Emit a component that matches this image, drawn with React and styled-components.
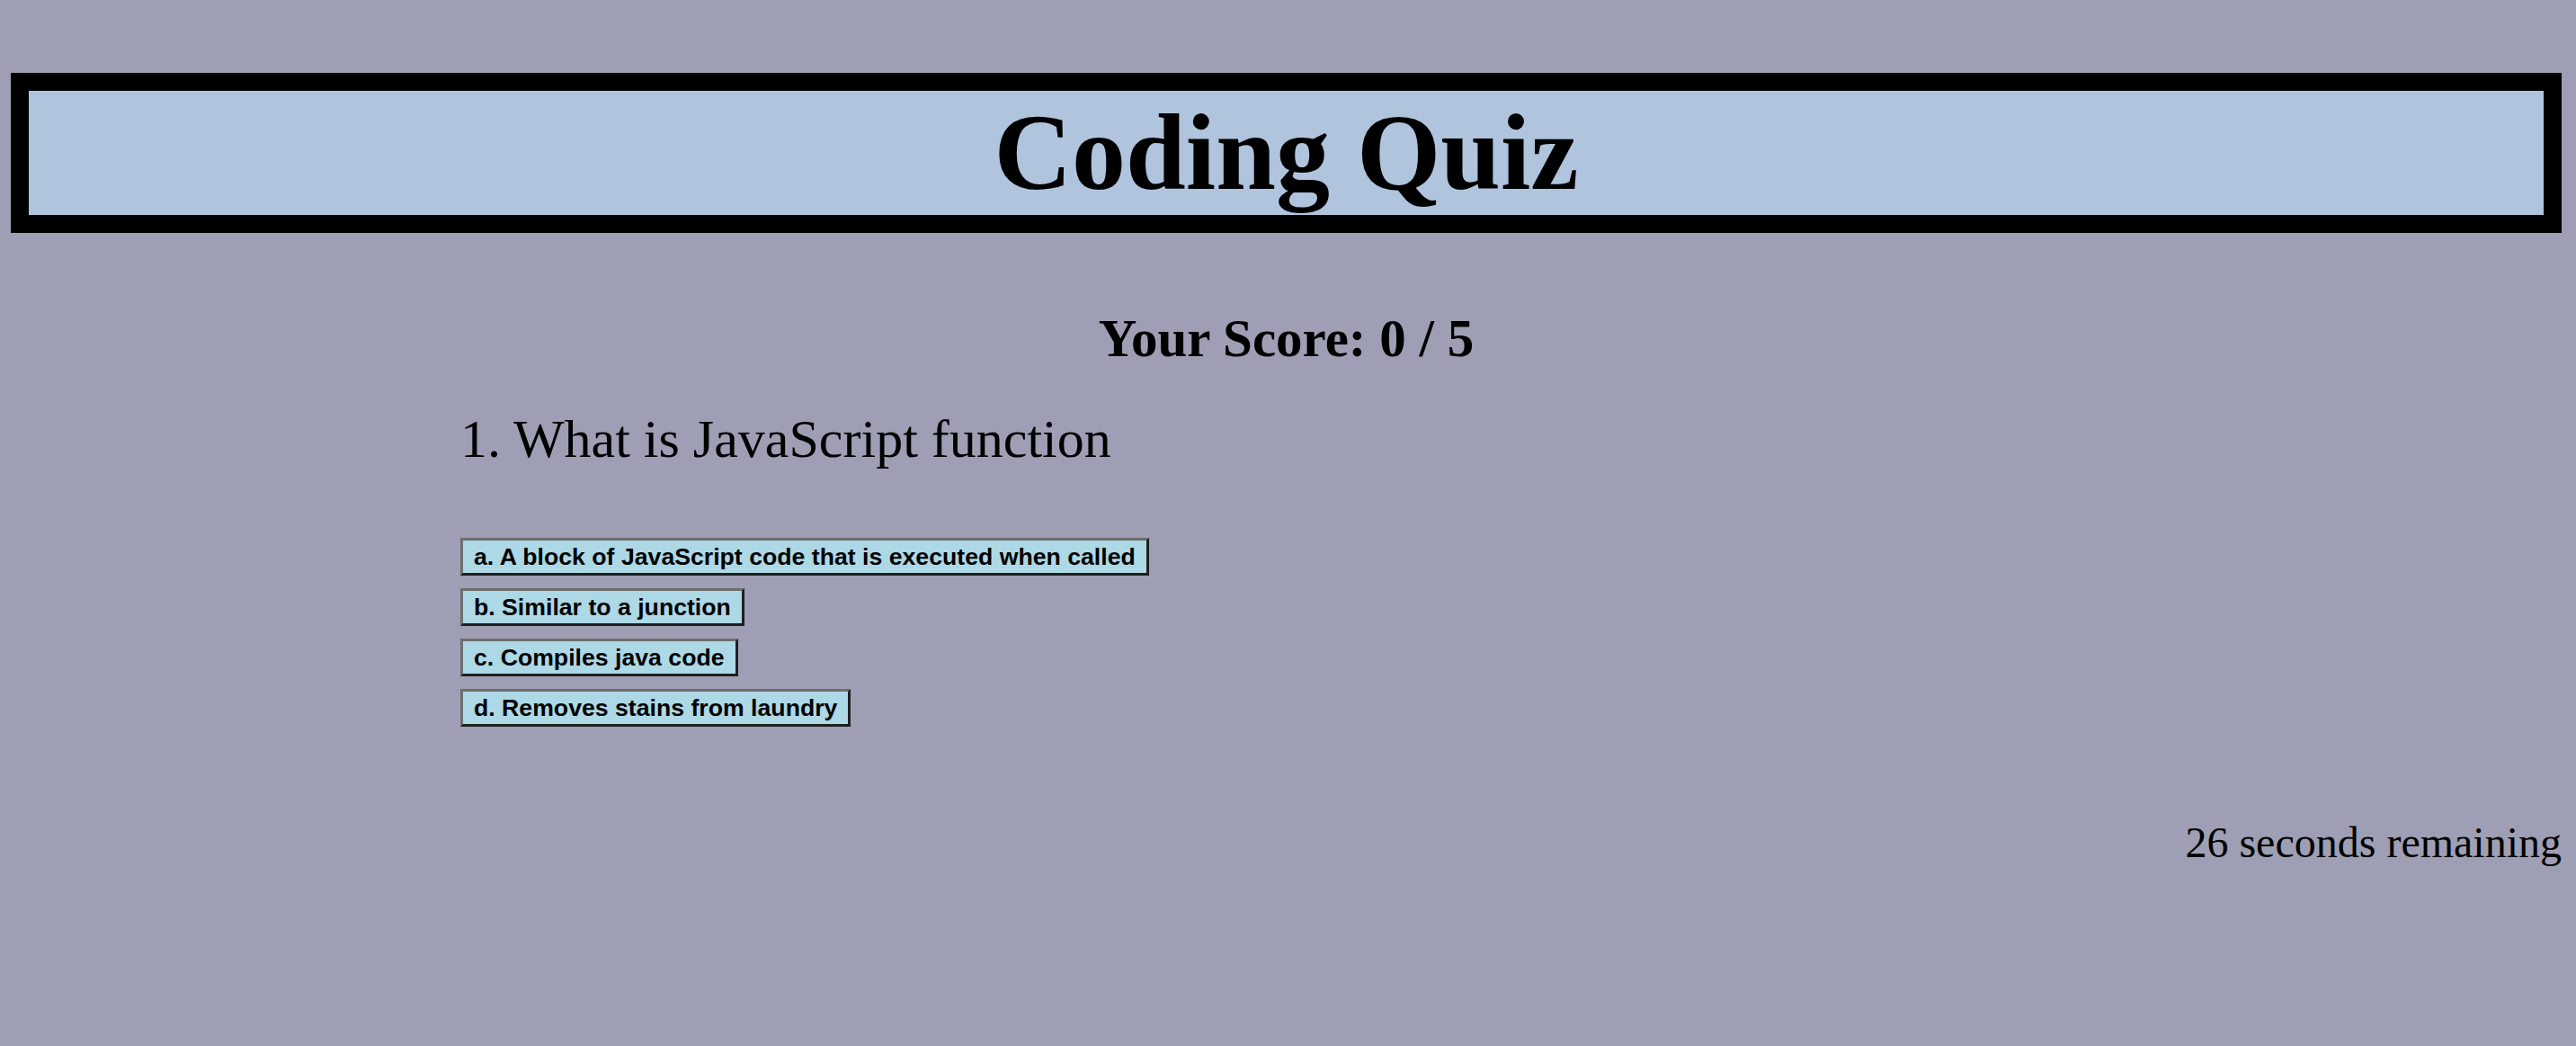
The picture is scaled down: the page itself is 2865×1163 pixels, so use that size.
import React from "react";
import styled, { createGlobalStyle } from "styled-components";

const questions = [
  {
    title: "What is JavaScript function",
    choices: [
      "a. A block of JavaScript code that is executed when called",
      "b. Similar to a junction",
      "c. Compiles java code",
      "d. Removes stains from laundry",
    ],
  },
];

const App = () => {
  const current = 0;
  const score = 0;
  const total = 5;
  const seconds = 26;
  const q = questions[current];

  return (
    <Page>
      <GlobalStyle />
      <Header>Coding Quiz</Header>
      <Score>
        Your Score: {score} / {total}
      </Score>
      <QuizX>
        <Question>
          {current + 1}. {q.title}
        </Question>
        <ChoiceList>
          {q.choices.map((c) => (
            <ChoiceButton key={c}>{c}</ChoiceButton>
          ))}
        </ChoiceList>
      </QuizX>
      <Timer>{seconds} seconds remaining</Timer>
    </Page>
  );
};

const GlobalStyle = createGlobalStyle`
  html, body {
    margin: 0;
    background: #9e9fb4;
  }

  body {
    font-family: "Liberation Serif", "Times New Roman", serif;
    color: #000;
  }
`;

const Page = styled.div`
  min-height: 100vh;
  box-sizing: border-box;
  padding: 81px 16px 40px 12px;
`;

const Header = styled.h1`
  margin: 0;
  border: 20px solid #000;
  background: #b0c4de;

  text-align: center;
  font-size: 120px;
  line-height: 138px;
  font-weight: bold;
`;

const Score = styled.h3`
  margin: 83px 0 0;

  text-align: center;
  font-size: 59px;
  line-height: 68px;
  font-weight: bold;
`;

const QuizX = styled.section`
  padding-left: 500px;
`;

const Question = styled.p`
  margin: 44px 0 0;

  font-size: 60px;
  line-height: 69px;
`;

const ChoiceList = styled.div`
  margin-top: 75px;

  display: flex;
  flex-direction: column;
  align-items: flex-start;
  gap: 14px;
`;

const ChoiceButton = styled.button`
  height: 42px;
  box-sizing: border-box;
  padding: 0 12px;

  background: #add8e6;
  border: 3px solid;
  border-color: #6e6e6e #1f1f1f #1f1f1f #6e6e6e;
  border-radius: 0;

  font-family: "Liberation Sans", Arial, sans-serif;
  font-size: 26.67px;
  font-weight: bold;
  color: #000;
  cursor: pointer;
`;

const Timer = styled.div`
  margin-top: 101px;

  text-align: right;
  font-size: 48px;
  line-height: 55px;
`;

export default App;
